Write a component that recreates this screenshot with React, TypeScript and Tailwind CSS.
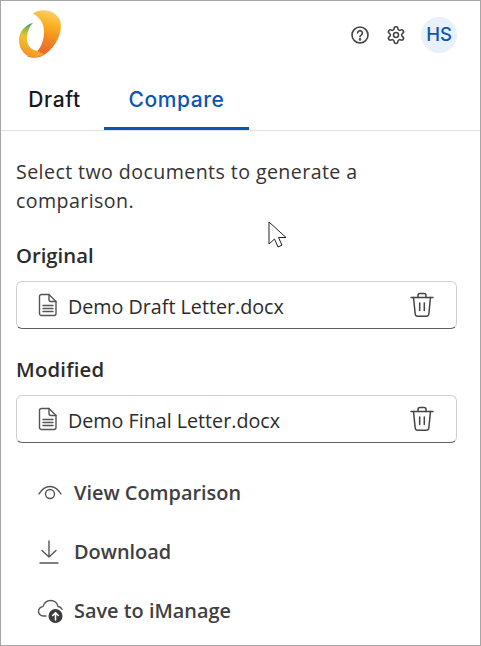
import React from "react";

const seg = { fontFamily: '"Open Sans", "Noto Sans", sans-serif' };

function Logo() {
  return (
    <svg width="46" height="52" viewBox="17 8 46 52" className="block">
      <defs>
        <linearGradient id="lg1" x1="0.65" y1="0" x2="0.45" y2="1">
          <stop offset="0" stopColor="#fdd06c" />
          <stop offset="0.3" stopColor="#fbb01f" />
          <stop offset="0.65" stopColor="#f08026" />
          <stop offset="1" stopColor="#e65f2b" />
        </linearGradient>
        <linearGradient id="lg2" x1="0.7" y1="0" x2="0.4" y2="1">
          <stop offset="0" stopColor="#0c9a74" />
          <stop offset="0.25" stopColor="#8fb944" />
          <stop offset="0.5" stopColor="#f3c22c" />
          <stop offset="1" stopColor="#f4902a" />
        </linearGradient>
      </defs>
      <path d="M33 13.500C40 8 55 9 60 20C64 33 54 50 42 56C38 58 31 58 27 56.500C33 55 37 52 39 49C44 43 45 31 43 25C41 19 37 16 33 13.500Z" fill="url(#lg1)" />
      <path d="M33 23C25 24.500 19 32 19 40C19 50 26 57.500 34 57.500C38 57.500 41 56 44 54C39 52 38 50.500 34 50C29 48 26.500 43 27 37C27.500 31 29.500 26 33 23Z" fill="url(#lg2)" />
    </svg>
  );
}

function FileIcon() {
  return (
    <svg width="20" height="24" viewBox="0 0 20 24" fill="none" stroke="#555" strokeWidth="1.4" strokeLinejoin="round" strokeLinecap="round" className="shrink-0">
      <path d="M3.500 1.500h7.500l7 7v12a2 2 0 0 1-2 2H3.500a2 2 0 0 1-2-2v-17a2 2 0 0 1 2-2z" />
      <path d="M11 1.500v5a2 2 0 0 0 2 2h5" />
      <path d="M5 12.500h10M5 15.500h10M5 18.500h10" />
    </svg>
  );
}

function TrashIcon() {
  return (
    <svg width="24" height="26" viewBox="0 0 24 26" fill="none" stroke="#444" strokeWidth="1.5" strokeLinecap="round" strokeLinejoin="round" className="shrink-0">
      <path d="M1 5.500h22" />
      <path d="M8 5.500V3.500a2 2 0 0 1 2-2h4a2 2 0 0 1 2 2v2" />
      <path d="M3.500 5.500l1.700 16.500a2.500 2.500 0 0 0 2.500 2.200h8.600a2.500 2.500 0 0 0 2.500-2.200l1.700-16.500" />
      <path d="M9.700 11v7.500M14.300 11v7.500" />
    </svg>
  );
}

function FileRow({ name }: { name: string }) {
  return (
    <div className="mt-[11px] flex h-[48px] items-center rounded-[6px] border border-[#cfcfcf] border-b-[#606060] pl-[21px] pr-[22px]">
      <FileIcon />
      <span className="ml-[10px] flex-1 pt-[3px] text-[19.7px] text-[#2b2b2b]" style={seg}>{name}</span>
      <TrashIcon />
    </div>
  );
}

function Action({ icon, label }: { icon: React.ReactNode; label: string }) {
  return (
    <div className="flex h-[59px] items-center">
      <div className="flex w-[58px] shrink-0 justify-start pl-[21px]">{icon}</div>
      <span className="text-[19.9px] font-semibold text-[#3f3f3f]" style={seg}>{label}</span>
    </div>
  );
}

export default function App() {
  return (
    <div className="h-[646px] w-[481px] overflow-hidden border border-[#a6a6a6] bg-white">
      <div className="flex h-[67px] items-start justify-between pl-[16px] pr-[23px] pt-[7px]">
        <Logo />
        <div className="mt-[9px] flex items-center" style={{ fontFamily: "Inter, sans-serif" }}>
          <svg width="20" height="20" viewBox="0 0 20 20" fill="none" stroke="#444" strokeWidth="1.6" strokeLinecap="round">
            <circle cx="10" cy="10" r="8" />
            <path d="M7.600 8a2.400 2.400 0 1 1 3.600 2.100c-.8.500-1.200.9-1.200 1.700" />
            <circle cx="10" cy="14.400" r="0.5" fill="#444" />
          </svg>
          <svg width="20" height="20" viewBox="0 0 24 24" fill="none" stroke="#444" strokeWidth="1.9" strokeLinecap="round" strokeLinejoin="round" className="ml-[16px]">
            <path d="M12.220 2h-.44a2 2 0 0 0-2 2v.18a2 2 0 0 1-1 1.730l-.43.25a2 2 0 0 1-2 0l-.15-.08a2 2 0 0 0-2.730.73l-.22.38a2 2 0 0 0 .73 2.730l.15.1a2 2 0 0 1 1 1.720v.51a2 2 0 0 1-1 1.740l-.15.09a2 2 0 0 0-.73 2.730l.22.38a2 2 0 0 0 2.730.73l.15-.08a2 2 0 0 1 2 0l.43.25a2 2 0 0 1 1 1.730V20a2 2 0 0 0 2 2h.44a2 2 0 0 0 2-2v-.18a2 2 0 0 1 1-1.730l.43-.25a2 2 0 0 1 2 0l.15.08a2 2 0 0 0 2.730-.73l.22-.39a2 2 0 0 0-.73-2.730l-.15-.08a2 2 0 0 1-1-1.740v-.5a2 2 0 0 1 1-1.740l.15-.09a2 2 0 0 0 .73-2.730l-.22-.38a2 2 0 0 0-2.730-.73l-.15.08a2 2 0 0 1-2 0l-.43-.25a2 2 0 0 1-1-1.730V4a2 2 0 0 0-2-2z" />
            <circle cx="12" cy="12" r="3" />
          </svg>
          <div className="ml-[15px] flex h-[36px] w-[36px] items-center justify-center rounded-full bg-[#e8f0fa] text-[18.500px] font-medium text-[#0b55b5]">HS</div>
        </div>
      </div>
      <div className="flex h-[63px] items-end border-b border-[#e2e2e2] pl-[3px] text-[21px] font-medium tracking-[0.6px]" style={{ fontFamily: "Inter, sans-serif" }}>
        <div className="flex h-[63px] w-[101px] items-center justify-center pt-[3px] text-[#16181d]">Draft</div>
        <div className="flex h-[63px] w-[145px] -ml-[1px] items-center justify-center border-b-[3px] border-[#0b55b5] pt-[6px] text-[#0b55b5]">Compare</div>
      </div>
      <div className="px-[15px] pr-[23px]">
        <p className="mt-[26px] text-[19.6px] leading-[29px] tracking-[0.42px] text-[#333]" style={seg}>Select two documents to generate a comparison.</p>
        <div className="mt-[26px] text-[20.300px] font-semibold leading-[29px] text-[#2b2b2b]" style={seg}>Original</div>
        <FileRow name="Demo Draft Letter.docx" />
        <div className="mt-[26px] text-[20.300px] font-semibold leading-[29px] tracking-[0.2px] text-[#2b2b2b]" style={seg}>Modified</div>
        <FileRow name="Demo Final Letter.docx" />
        <div className="mt-[20px]">
          <Action
            label="View Comparison"
            icon={
              <svg width="26" height="20" viewBox="0 0 26 20" fill="none" stroke="#555" strokeWidth="1.4" strokeLinecap="round">
                <path d="M2 11C5 6 9 3.500 13 3.500S21 6 24 11" />
                <circle cx="13" cy="11" r="4.500" />
              </svg>
            }
          />
          <Action
            label="Download"
            icon={
              <svg width="20" height="26" viewBox="0 0 20 26" fill="none" stroke="#555" strokeWidth="1.4" strokeLinecap="round" strokeLinejoin="round" className="ml-[2px]">
                <path d="M10 2v16M3 11.500L10 18l7-6.500M1 24h18" />
              </svg>
            }
          />
          <Action
            label="Save to iManage"
            icon={
              <svg width="28" height="26" viewBox="0 0 28 26" fill="none" strokeLinecap="round" strokeLinejoin="round">
                <path d="M9 18H6.500a4.700 4.700 0 0 1-.6-9.400C7 5 9.800 2.500 13.500 2.500c3.700 0 6.700 2.500 7.500 6 1.800.3 3.300 1.300 4 2.800" stroke="#555" strokeWidth="1.4" />
                <circle cx="18.500" cy="18" r="7" fill="#3b3b3b" />
                <path d="M18.500 22v-7M15.700 17.500l2.800-2.800 2.800 2.800" stroke="#fff" strokeWidth="1.600" />
              </svg>
            }
          />
        </div>
      </div>
      <svg width="20" height="28" viewBox="0 0 20 28" className="absolute left-[268px] top-[221px]">
        <path d="M1 1v22l5.500-5 3.500 8 4-1.800-3.500-7.700h7.500z" fill="#fff" stroke="#222" strokeWidth="1" strokeLinejoin="round" />
      </svg>
    </div>
  );
}
